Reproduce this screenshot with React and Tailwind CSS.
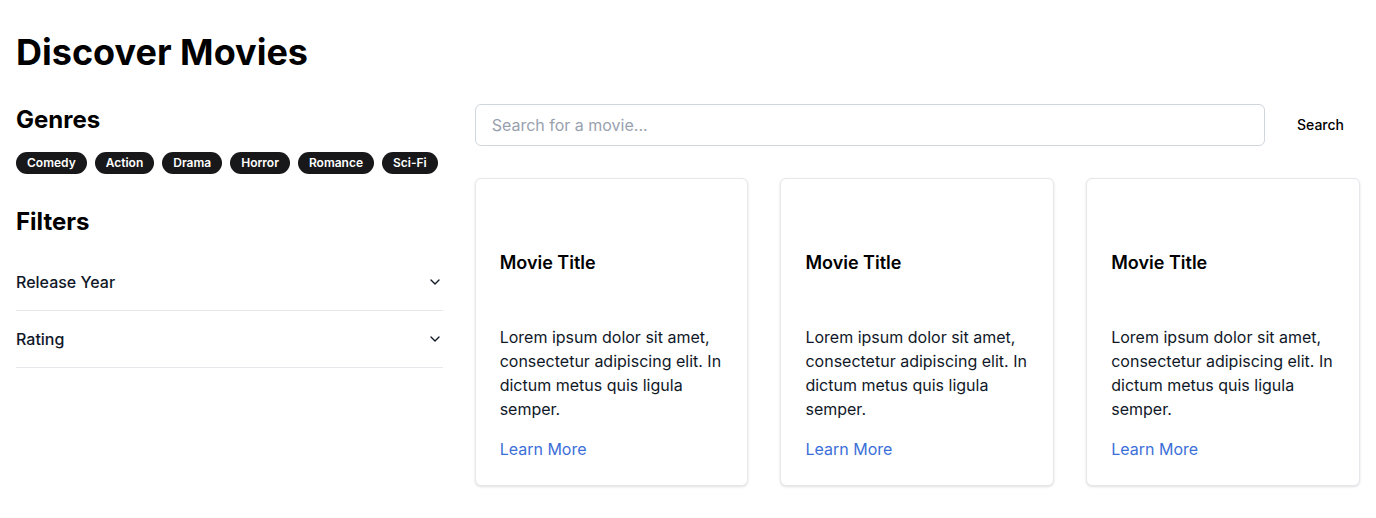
import { ChevronDown } from "lucide-react";

const genres = ["Comedy", "Action", "Drama", "Horror", "Romance", "Sci-Fi"];
const filters = ["Release Year", "Rating"];

const MovieCard = () => (
  <div className="flex flex-col rounded-md border border-gray-200 bg-white p-6 shadow-sm">
    <h3 className="mt-[46px] text-lg font-semibold leading-7 text-black">Movie Title</h3>
    <p className="mt-12 text-base leading-6 text-gray-900">
      Lorem ipsum dolor sit amet, consectetur adipiscing elit. In dictum metus quis ligula semper.
    </p>
    <a href="#" className="mt-4 text-base leading-6 text-[#3b6fd8]">
      Learn More
    </a>
  </div>
);

export default function App() {
  return (
    <div className="min-h-screen bg-white px-4 py-8 text-black" style={{ fontFamily: "Inter, 'Noto Sans', sans-serif" }}>
      <h1 className="mb-8 text-4xl font-bold leading-10">Discover Movies</h1>
      <div className="grid grid-cols-3 gap-8">
        {/* Sidebar */}
        <aside className="col-span-1">
          <h2 className="mb-4 text-2xl font-bold leading-8">Genres</h2>
          <div className="flex flex-wrap gap-2">
            {genres.map((g) => (
              <span
                key={g}
                className="rounded-full border border-transparent bg-[#18181b] px-2.5 py-0.5 text-xs font-semibold leading-4 text-white"
              >
                {g}
              </span>
            ))}
          </div>
          <h2 className="mb-4 mt-8 text-2xl font-bold leading-8">Filters</h2>
          <div>
            {filters.map((f) => (
              <div key={f} className="border-b border-gray-200">
                <button className="flex w-full items-center justify-between py-4 text-base font-medium leading-6 text-gray-900">
                  {f}
                  <ChevronDown className="h-4 w-4" strokeWidth={2} />
                </button>
              </div>
            ))}
          </div>
        </aside>

        {/* Main */}
        <main className="col-span-2">
          <div className="mb-8 flex items-center gap-4">
            <input
              type="text"
              placeholder="Search for a movie..."
              className="h-[42px] flex-1 rounded-md border border-gray-300 px-4 text-base text-gray-900 placeholder:text-gray-400 outline-none"
            />
            <button className="px-4 py-2 text-sm font-medium text-black">Search</button>
          </div>
          <div className="grid grid-cols-3 gap-8">
            <MovieCard />
            <MovieCard />
            <MovieCard />
          </div>
        </main>
      </div>
    </div>
  );
}
